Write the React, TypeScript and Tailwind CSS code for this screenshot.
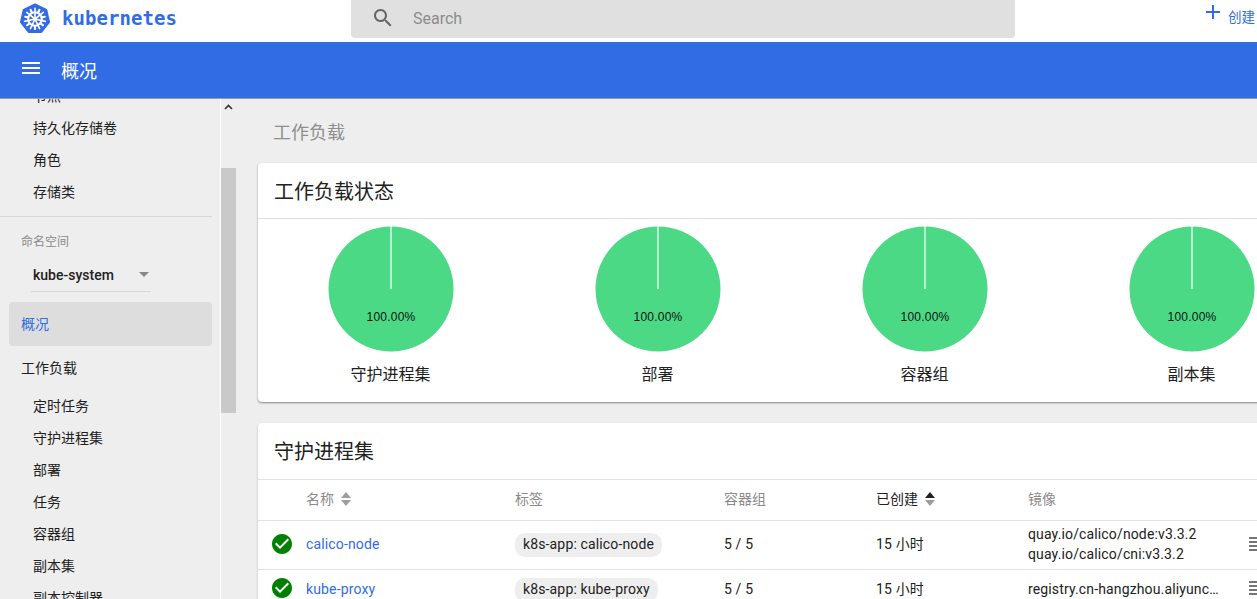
import React from "react";

const SEARCH = "M15.5 14h-.79l-.28-.27C15.41 12.59 16 11.11 16 9.5 16 5.91 13.09 3 9.5 3S3 5.91 3 9.5 5.91 16 9.5 16c1.61 0 3.09-.59 4.23-1.57l.27.28v.79l5 4.99L20.49 19l-4.99-5zm-6 0C7.01 14 5 11.99 5 9.5S7.01 5 9.5 5 14 7.01 14 9.5 11.99 14 9.5 14z";
const MENU = "M3 18h18v-2H3v2zm0-5h18v-2H3v2zm0-7v2h18V6H3z";
const ADD = "M19 13h-6v6h-2v-6H5v-2h6V5h2v6h6v2z";
const CHECK = "M12 2C6.48 2 2 6.48 2 12s4.48 10 10 10 10-4.48 10-10S17.52 2 12 2zm-2 15l-5-5 1.41-1.41L10 14.17l7.59-7.59L19 8l-9 9z";

function Icon({ d, size = 24, className = "" }: { d: string; size?: number; className?: string }) {
  return (
    <svg width={size} height={size} viewBox="0 0 24 24" className={className} fill="currentColor">
      <path d={d} />
    </svg>
  );
}

function Logo() {
  const spokes = [0, 51.43, 102.86, 154.29, 205.71, 257.14, 308.57];
  return (
    <svg width="32" height="32" viewBox="0 0 32 32">
      <path d="M16 1.5 27.3 6.9 30.1 19.1 22.3 28.9H9.7L1.9 19.1 4.7 6.9Z" fill="#326ce5" stroke="#326ce5" strokeWidth="2" strokeLinejoin="round" />
      <g stroke="#fff" fill="none" strokeLinecap="round">
        <circle cx="16" cy="16" r="6.8" strokeWidth="2" />
        {spokes.map((a) => (
          <line key={a} x1="16" y1="16" x2="16" y2="5.4" strokeWidth="1.6" transform={`rotate(${a} 16 16)`} />
        ))}
        {spokes.map((a) => (
          <line key={a} x1="16" y1="6" x2="16" y2="9" strokeWidth="2.2" transform={`rotate(${a + 25.7} 16 16)`} />
        ))}
      </g>
      <circle cx="16" cy="16" r="2" fill="#fff" />
    </svg>
  );
}

function Sub({ label }: { label: string }) {
  return <div className="h-8 pl-[33px] flex items-center text-sm text-[#212121] whitespace-nowrap">{label}</div>;
}

function Pie({ label }: { label: string }) {
  return (
    <div className="flex flex-col items-center">
      <svg width="126" height="126" viewBox="0 0 126 126" className="block">
        <circle cx="63" cy="63" r="62.5" fill="#4bd985" />
        <line x1="63" y1="0" x2="63" y2="63" stroke="#fff" strokeWidth="1.2" />
        <text x="63" y="95" textAnchor="middle" fontSize="12" letterSpacing="0.2" fill="#111" fontFamily="'Liberation Sans', sans-serif">100.00%</text>
      </svg>
      <div className="mt-[13px] h-5 leading-5 text-base text-[#212121]">{label}</div>
    </div>
  );
}

function SortIcon({ active }: { active?: boolean }) {
  return (
    <svg width="10" height="14" viewBox="0 0 10 14" className="ml-[7px]">
      <path d="M5 0 10 6H0Z" fill={active ? "#212121" : "#9e9e9e"} />
      <path d="M5 14 0 8H10Z" fill="#9e9e9e" />
    </svg>
  );
}

const COLS = "grid grid-cols-[48px_209px_209px_152px_152px_221px_1fr] items-center";

function KebabLines() {
  return (
    <div className="pb-[3px]">
      <svg width="14" height="14" viewBox="0 0 14 14" className="block">
        <path d="M0 0h14v2H0zM0 4h14v2H0zM0 8h14v2H0zM0 12h14v2H0z" fill="#757575" />
      </svg>
    </div>
  );
}

function Row({ name, chip, images, tall }: { name: string; chip: string; images: string[]; tall?: boolean }) {
  return (
    <div className={`${COLS} ${tall ? "h-[49px]" : "h-[40px]"} border-b border-[#e0e0e0] text-sm text-[#212121] tracking-[0.14px]`}>
      <div className="pl-3 pb-[3px] flex">
        <Icon d={CHECK} size={24} className="text-[#008000]" />
      </div>
      <div className="pb-[2px] text-[#326ce5]">{name}</div>
      <div>
        <span className="inline-block h-6 leading-[22px] px-2 rounded-[10px] bg-[#eeeeee]">{chip}</span>
      </div>
      <div className="pb-[2px]">5 / 5</div>
      <div className="pb-[2px]">15 小时</div>
      <div className="pb-[2px] leading-5 whitespace-nowrap">
        {images.map((i) => (
          <div key={i}>{i}</div>
        ))}
      </div>
      <KebabLines />
    </div>
  );
}

export default function App() {
  return (
    <div
      className="w-[1257px] h-[599px] overflow-hidden flex flex-col bg-[#eeeeee]"
      style={{ fontFamily: "Roboto, 'Noto Sans CJK SC', sans-serif" }}
    >
      <header className="h-[42px] shrink-0 bg-white flex">
        <div className="w-[351px] pl-[19px] flex items-start pt-[3px]">
          <Logo />
          <span
            className="ml-[11px] mt-[2px] text-[#326ce5] font-bold text-[19px] leading-[26px] tracking-[0.05px]"
            style={{ fontFamily: "'DejaVu Sans Mono', monospace" }}
          >
            kubernetes
          </span>
        </div>
        <div className="w-[664px] h-[38px] bg-[#e0e0e0] rounded-b-sm flex items-center pl-5 text-[#666]">
          <Icon d={SEARCH} className="-mt-[2px]" />
          <span className="ml-[18px] text-base text-[#8c8c8c]">Search</span>
        </div>
        <div className="flex-1 flex items-start pl-[186px] text-[#326ce5]">
          <Icon d={ADD} />
          <span className="ml-[3px] mt-[8px] text-[13.5px] leading-[18px] whitespace-nowrap">创建</span>
        </div>
      </header>

      <div className="h-[57px] shrink-0 bg-[#326ce5] flex items-start pl-[19px] text-white border-b border-[#9a9a9a] relative z-10">
        <Icon d={MENU} className="mt-[14px]" />
        <span className="ml-[18px] mt-[16px] text-lg leading-7">概况</span>
      </div>

      <div className="flex-1 flex min-h-0">
        <aside className="w-[220px] shrink-0 overflow-hidden">
          <div className="-mt-[19px]">
            <Sub label="节点" />
            <Sub label="持久化存储卷" />
            <Sub label="角色" />
            <Sub label="存储类" />
            <div className="mt-2 w-[212px] border-b border-[#d6d6d6]" />
            <div className="mt-[17px] h-4 leading-4 pl-[21px] text-xs text-[#8a8a8a]">命名空间</div>
            <div className="mt-[8px] ml-[31px] w-[120px] h-[34px] border-b border-[#d6d6d6] flex items-center justify-between pl-[2px] pr-[2px]">
              <span className="text-sm font-medium text-[#212121]">kube-system</span>
              <span className="w-0 h-0 border-x-[5px] border-x-transparent border-t-[5px] border-t-[#888]" />
            </div>
            <div className="mt-[10px] ml-[9px] w-[203px] h-11 rounded-sm bg-[#dddddd] flex items-center pl-3 text-sm text-[#326ce5]">概况</div>
            <div className="h-11 pl-[21px] flex items-center text-sm text-[#212121]">工作负载</div>
            <Sub label="定时任务" />
            <Sub label="守护进程集" />
            <Sub label="部署" />
            <Sub label="任务" />
            <Sub label="容器组" />
            <Sub label="副本集" />
            <Sub label="副本控制器" />
          </div>
        </aside>

        <div className="w-[16px] shrink-0 border-l border-white flex flex-col items-center">
          <svg width="9" height="6" viewBox="0 0 9 6" className="mt-[5px]">
            <path d="M1 5 4.5 1.5 8 5" fill="none" stroke="#333" strokeWidth="1.6" />
          </svg>
          <div className="mt-[58px] w-[15px] h-[245px] bg-[#c9c9c9]" />
        </div>

        <main className="w-[1066px] shrink-0 ml-[22px]">
          <div className="h-[64px] pl-[15px] pt-[3px] flex items-center text-lg text-[#8f8f8f]">工作负载</div>

          <section className="bg-white rounded-sm shadow-[0_1px_2px_rgba(0,0,0,0.45)] h-[239px]">
            <div className="h-[56px] pl-4 pt-[2px] flex items-center text-xl text-[#212121] border-b border-[#e0e0e0]">工作负载状态</div>
            <div className="grid grid-cols-[267px_267px_267px_267px] pt-[7px] -ml-px">
              <Pie label="守护进程集" />
              <Pie label="部署" />
              <Pie label="容器组" />
              <Pie label="副本集" />
            </div>
          </section>

          <section className="mt-[21px] bg-white rounded-sm shadow-[0_1px_2px_rgba(0,0,0,0.3)]">
            <div className="h-[57px] pl-4 pt-[2px] flex items-center text-xl text-[#212121] border-b border-[#e0e0e0]">守护进程集</div>
            <div className={`${COLS} h-[41px] border-b border-[#e0e0e0] text-sm text-[#8a8a8a]`}>
              <div />
              <div className="flex items-center pb-[2px]">名称<SortIcon /></div>
              <div className="pb-[2px]">标签</div>
              <div className="pb-[2px]">容器组</div>
              <div className="flex items-center pb-[2px] text-[#212121]">已创建<SortIcon active /></div>
              <div className="pb-[2px]">镜像</div>
              <div />
            </div>
            <Row tall name="calico-node" chip="k8s-app: calico-node" images={["quay.io/calico/node:v3.3.2", "quay.io/calico/cni:v3.3.2"]} />
            <Row name="kube-proxy" chip="k8s-app: kube-proxy" images={["registry.cn-hangzhou.aliyunc…"]} />
          </section>
        </main>
      </div>
    </div>
  );
}
